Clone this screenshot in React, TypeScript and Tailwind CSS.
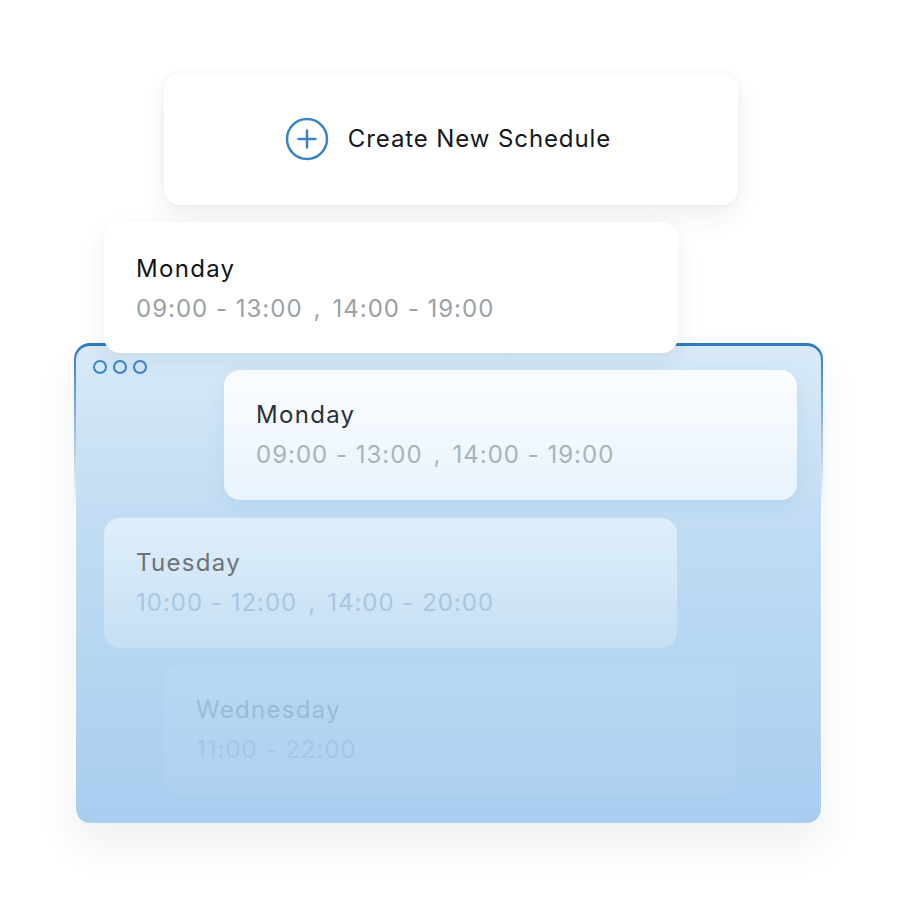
import React from 'react';

type Day = {
  name: string;
  times: string[];
  offset: string;
  card: string;
  title: string;
  time: string;
};

const DAYS: Day[] = [
  {
    name: 'Monday',
    times: ['09:00 - 13:00', '14:00 - 19:00'],
    offset: 'ml-[148px] mt-[-4px]',
    card: 'bg-gradient-to-b from-[#fbfdff] to-[#e8f3fc] shadow-[0_6px_18px_rgba(90,140,190,0.12)]',
    title: 'text-[#2b3036]',
    time: 'text-[#a9b2bc]',
  },
  {
    name: 'Tuesday',
    times: ['10:00 - 12:00', '14:00 - 20:00'],
    offset: 'ml-[28px] mt-[18px]',
    card: 'bg-gradient-to-b from-[#dfeffa] to-[#c5dff4]',
    title: 'text-[#6c737b]',
    time: 'text-[#a9c5df]',
  },
  {
    name: 'Wednesday',
    times: ['11:00 - 22:00'],
    offset: 'ml-[88px] mt-[17px]',
    card: 'bg-gradient-to-b from-[#b8d8f3] to-[#aed1f0]',
    title: 'text-[#9dbad4]',
    time: 'text-[#a5c6e4]',
  },
];

function Times({ times, className }: { times: string[]; className: string }) {
  return (
    <div className={`mt-2 flex items-center text-[24px] leading-8 tracking-[1px] ${className}`}>
      {times.map((t, i) => (
        <React.Fragment key={t}>
          {i > 0 && <span className="mx-[11px]">,</span>}
          <span>{t}</span>
        </React.Fragment>
      ))}
    </div>
  );
}

function PlusCircle() {
  return (
    <svg width="44" height="44" viewBox="0 0 44 44" fill="none">
      <circle cx="22" cy="22" r="20" stroke="#3a83c6" strokeWidth="2.5" />
      <path d="M22 13.5v17M13.5 22h17" stroke="#3a83c6" strokeWidth="2.5" strokeLinecap="round" />
    </svg>
  );
}

export default function App() {
  return (
    <div className="h-[900px] w-[900px] overflow-hidden bg-white pt-[73px] font-['Inter',sans-serif]">
      <div className="ml-[164px] flex h-[132px] w-[574px] items-center justify-center gap-[19px] rounded-2xl bg-white pr-[6px] shadow-[0_12px_24px_rgba(20,40,70,0.07),0_0_10px_rgba(20,40,70,0.04)]">
        <PlusCircle />
        <span className="text-[24px] tracking-[0.9px] text-[#14171c]">Create New Schedule</span>
      </div>

      <div className="relative z-10 ml-[104px] mt-[17px] h-[131px] w-[574px] rounded-2xl bg-white px-8 pt-[31px] shadow-[0_8px_24px_rgba(20,40,70,0.08)]">
        <div className="text-[24px] leading-8 tracking-[1.3px] text-[#111418]">Monday</div>
        <Times times={['09:00 - 13:00', '14:00 - 19:00']} className="text-[#9ba0a6]" />
      </div>

      <div className="ml-[74px] mt-[-10px] w-[749px] rounded-2xl bg-gradient-to-b from-[#2d79c2] via-[#7fb3e0]/0 via-35% to-transparent px-[2px] pt-[2.5px] shadow-[0_22px_40px_rgba(20,40,70,0.07)]">
        <div className="h-[477.5px] rounded-[14px] bg-gradient-to-b from-[#d8eaf8] via-[#c2ddf3] via-35% to-[#a8cdef] pt-[14px]">
          <div className="flex gap-[6px] pl-[17px]">
            <span className="h-[14px] w-[14px] rounded-full border-[2.5px] border-[#3a86c8]" />
            <span className="h-[14px] w-[14px] rounded-full border-[2.5px] border-[#3a86c8]" />
            <span className="h-[14px] w-[14px] rounded-full border-[2.5px] border-[#3a86c8]" />
          </div>
          {DAYS.map((d) => (
            <div
              key={d.name}
              className={`h-[130px] w-[573px] rounded-2xl px-8 pt-[29px] ${d.offset} ${d.card}`}
            >
              <div className={`text-[24px] leading-8 tracking-[1.3px] ${d.title}`}>{d.name}</div>
              <Times times={d.times} className={d.time} />
            </div>
          ))}
        </div>
      </div>
    </div>
  );
}
